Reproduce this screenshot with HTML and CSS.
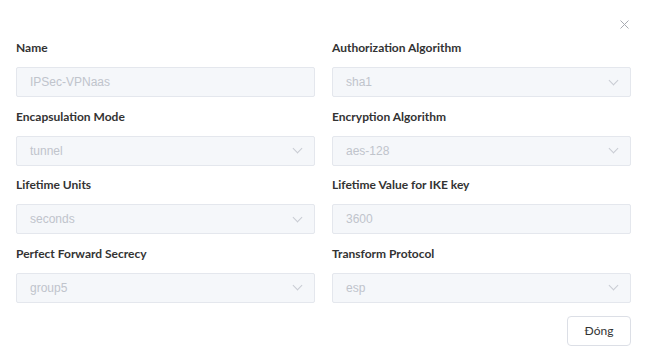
FILE: index.html
```html
<!DOCTYPE html>
<html lang="en">
<head>
    <meta charset="UTF-8">
    <meta name="viewport" content="width=device-width, initial-scale=1.0">
    <title>IPSec Policy</title>
    <link rel="stylesheet" href="styles.css">
</head>
<body>
    <div class="dialog">
        <!-- Header with close button -->
        <div class="dialog-header">
            <button class="close-btn" aria-label="Close">
                <svg width="9" height="9" viewBox="0 0 9 9"><path d="M0.5 0.5 L8.5 8.5 M8.5 0.5 L0.5 8.5" stroke="#a8abb2" stroke-width="1" fill="none"/></svg>
            </button>
        </div>

        <!-- Form fields -->
        <div class="form-grid">
            <div class="field">
                <label class="field-label">Name</label>
                <div class="input-box">IPSec-VPNaas</div>
            </div>
            <div class="field">
                <label class="field-label">Authorization Algorithm</label>
                <div class="input-box select">sha1<span class="chevron"></span></div>
            </div>
            <div class="field">
                <label class="field-label">Encapsulation Mode</label>
                <div class="input-box select">tunnel<span class="chevron"></span></div>
            </div>
            <div class="field">
                <label class="field-label">Encryption Algorithm</label>
                <div class="input-box select">aes-128<span class="chevron"></span></div>
            </div>
            <div class="field">
                <label class="field-label">Lifetime Units</label>
                <div class="input-box select">seconds<span class="chevron"></span></div>
            </div>
            <div class="field">
                <label class="field-label">Lifetime Value for IKE key</label>
                <div class="input-box">3600</div>
            </div>
            <div class="field">
                <label class="field-label">Perfect Forward Secrecy</label>
                <div class="input-box select">group5<span class="chevron"></span></div>
            </div>
            <div class="field">
                <label class="field-label">Transform Protocol</label>
                <div class="input-box select">esp<span class="chevron"></span></div>
            </div>
        </div>

        <!-- Footer -->
        <div class="dialog-footer">
            <button class="btn">Đóng</button>
        </div>
    </div>
</body>
</html>
```

FILE: styles.css
```css
body {
    margin: 0;
    padding: 0;
    background-color: #fff;
    font-family: 'Lato', 'Liberation Sans', sans-serif;
}

.dialog {
    padding: 0 17px 0 16px;
}

.dialog-header {
    display: flex;
    justify-content: flex-end;
    height: 38px;
}

.close-btn {
    border: none;
    background: none;
    padding: 0;
    margin: 20px 2px 0 0;
    width: 9px;
    height: 9px;
    display: flex;
    cursor: pointer;
}

.form-grid {
    display: grid;
    grid-template-columns: 1fr 1fr;
    column-gap: 17px;
    row-gap: 9.67px;
}

.field {
    display: flex;
    flex-direction: column;
}

.field-label {
    font-size: 12px;
    font-weight: 700;
    color: #333;
    line-height: 20px;
    margin-bottom: 9px;
}

.input-box {
    height: 30px;
    box-sizing: border-box;
    background-color: #f5f7fa;
    border: 1px solid #e4e7ed;
    border-radius: 2px;
    padding: 0 13px;
    display: flex;
    align-items: center;
    justify-content: space-between;
    font-family: 'Liberation Sans', Arial, sans-serif;
    font-size: 12px;
    color: #c0c4cc;
}

/* Down arrow for the select boxes */
.chevron {
    width: 6px;
    height: 6px;
    border-right: 1px solid #c9ccd3;
    border-bottom: 1px solid #c9ccd3;
    transform: rotate(45deg);
    margin: -4px 0 0 0;
}

.dialog-footer {
    display: flex;
    justify-content: flex-end;
    margin-top: 13px;
}

.btn {
    width: 64px;
    height: 30px;
    background-color: #fff;
    border: 1px solid #dcdfe6;
    border-radius: 4px;
    font-family: 'Lato', 'Liberation Sans', sans-serif;
    font-size: 12px;
    color: #333;
    cursor: pointer;
}
```
